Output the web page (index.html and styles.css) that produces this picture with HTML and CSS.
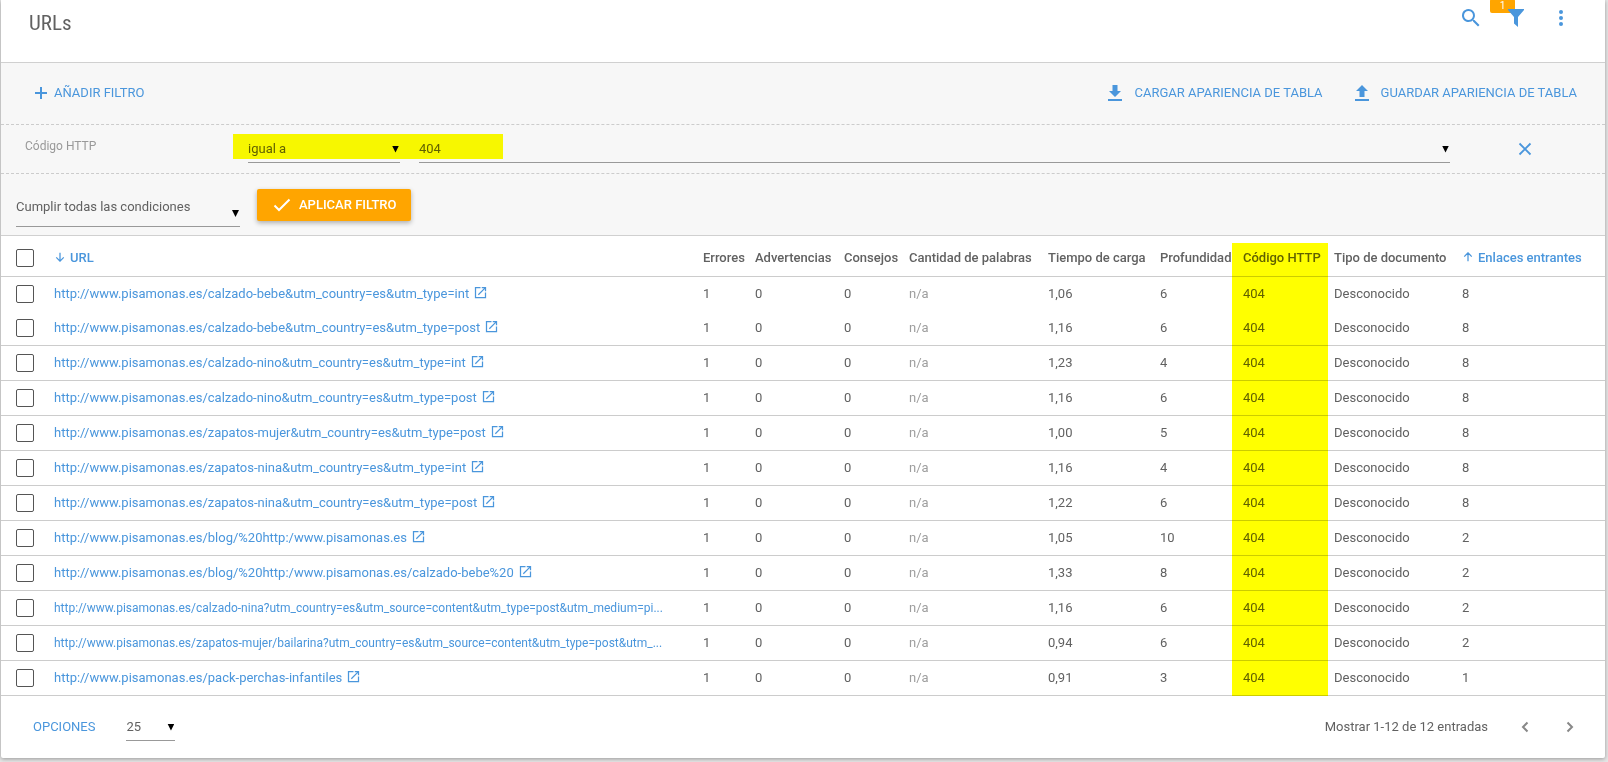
FILE: index.html
```html
<!DOCTYPE html>
<html lang="es">
<head>
<meta charset="utf-8">
<title>URLs</title>
<link rel="stylesheet" href="styles.css">
</head>
<body>
<svg class="sprite" aria-hidden="true">
  <symbol id="i-open" viewBox="0 0 24 24"><path d="M19 19H5V5h7V3H3v18h18v-9h-2v7zM14 3v2h3.600l-9.800 9.800 1.400 1.400L19 6.400V10h2V3h-7z"/></symbol>
  <symbol id="i-arrow" viewBox="0 0 12 12"><path d="M6 1v10M1.500 6.500L6 11l4.500-4.500"/></symbol>
</svg>
<main class="card">
  <header class="top">
    <h1 class="title">URLs</h1>
    <div class="tools">
      <button class="icon-btn" type="button" aria-label="Buscar">
        <svg width="24" height="24" viewBox="0 0 24 24"><path d="M15.500 14h-.8l-.3-.3A6.500 6.500 0 1 0 13.700 14.400l.3.3v.8l5 5 1.500-1.500-5-5zm-6 0a4.500 4.500 0 1 1 0-9 4.500 4.500 0 0 1 0 9z"/></svg>
      </button>
      <button class="icon-btn" type="button" aria-label="Filtros">
        <svg width="24" height="24" viewBox="0 0 24 24"><path d="M4 3h16v1L14 11v10L10 17.500V11L4 4z"/></svg>
        <span class="badge">1</span>
      </button>
      <button class="icon-btn" type="button" aria-label="Más opciones">
        <svg width="24" height="24" viewBox="0 0 24 24"><circle cx="12" cy="6" r="2"/><circle cx="12" cy="12" r="2"/><circle cx="12" cy="18" r="2"/></svg>
      </button>
    </div>
  </header>

  <section class="filters">
    <div class="actions">
      <button class="link-btn add" type="button"><svg width="14" height="14" viewBox="0 0 14 14"><path d="M6 1h2v5h5v2H8v5H6V8H1V6h5z"/></svg>AÑADIR FILTRO</button>
      <button class="link-btn load" type="button"><svg width="14" height="16" viewBox="0 0 14 16"><path d="M4.500 0h5v6H13L7 12 1 6h3.500zM0 14h14v2H0z"/></svg>CARGAR APARIENCIA DE TABLA</button>
      <button class="link-btn" type="button"><svg width="14" height="16" viewBox="0 0 14 16"><path d="M7 0l6 6H9.500v6h-5V6H1zM0 14h14v2H0z"/></svg>GUARDAR APARIENCIA DE TABLA</button>
    </div>
    <div class="condition">
      <label class="cond-name" for="op">Código HTTP</label>
      <span class="select op"><select id="op"><option>igual a</option></select></span>
      <span class="select val"><select aria-label="Valor"><option>404</option></select></span>
      <button class="icon-btn" type="button" aria-label="Quitar filtro"><svg width="14" height="14" viewBox="0 0 14 14"><path d="M1.500 1.500l11 11M12.500 1.500l-11 11" fill="none" stroke="currentColor" stroke-width="1.800"/></svg></button>
      <span class="marker"></span>
    </div>
    <div class="apply">
      <span class="select match"><select aria-label="Condiciones"><option>Cumplir todas las condiciones</option></select></span>
      <button class="primary" type="button"><svg width="18" height="14" viewBox="0 0 18 14"><path d="M1.500 7.500l4.500 4.500L16.500 1.500"/></svg>APLICAR FILTRO</button>
    </div>
  </section>

  <table class="grid">
    <colgroup><col class="c-check"><col><col class="c-err"><col class="c-adv"><col class="c-con"><col class="c-pal"><col class="c-load"><col class="c-prof"><col class="c-http"><col class="c-tipo"><col class="c-enl"></colgroup>
    <thead>
      <tr><th><input type="checkbox" aria-label="Seleccionar todo"></th><th class="sorted"><svg class="arrow" width="10" height="10"><use href="#i-arrow"/></svg>URL</th><th>Errores</th><th>Advertencias</th><th>Consejos</th><th>Cantidad de palabras</th><th>Tiempo de carga</th><th>Profundidad</th><th class="http">Código HTTP</th><th class="tipo">Tipo de documento</th><th class="sorted"><svg class="arrow up" width="10" height="10"><use href="#i-arrow"/></svg>Enlaces entrantes</th></tr>
    </thead>
    <tbody>
      <tr class="joined"><td><input type="checkbox" aria-label="Fila 1"></td><td class="url"><a href="#">http://www.pisamonas.es/calzado-bebe&amp;utm_country=es&amp;utm_type=int<svg class="open"><use href="#i-open"/></svg></a></td><td>1</td><td>0</td><td>0</td><td class="na">n/a</td><td>1,06</td><td>6</td><td class="http">404</td><td class="tipo">Desconocido</td><td>8</td></tr>
      <tr><td><input type="checkbox" aria-label="Fila 2"></td><td class="url"><a href="#">http://www.pisamonas.es/calzado-bebe&amp;utm_country=es&amp;utm_type=post<svg class="open"><use href="#i-open"/></svg></a></td><td>1</td><td>0</td><td>0</td><td class="na">n/a</td><td>1,16</td><td>6</td><td class="http">404</td><td class="tipo">Desconocido</td><td>8</td></tr>
      <tr><td><input type="checkbox" aria-label="Fila 3"></td><td class="url"><a href="#">http://www.pisamonas.es/calzado-nino&amp;utm_country=es&amp;utm_type=int<svg class="open"><use href="#i-open"/></svg></a></td><td>1</td><td>0</td><td>0</td><td class="na">n/a</td><td>1,23</td><td>4</td><td class="http">404</td><td class="tipo">Desconocido</td><td>8</td></tr>
      <tr><td><input type="checkbox" aria-label="Fila 4"></td><td class="url"><a href="#">http://www.pisamonas.es/calzado-nino&amp;utm_country=es&amp;utm_type=post<svg class="open"><use href="#i-open"/></svg></a></td><td>1</td><td>0</td><td>0</td><td class="na">n/a</td><td>1,16</td><td>6</td><td class="http">404</td><td class="tipo">Desconocido</td><td>8</td></tr>
      <tr><td><input type="checkbox" aria-label="Fila 5"></td><td class="url"><a href="#">http://www.pisamonas.es/zapatos-mujer&amp;utm_country=es&amp;utm_type=post<svg class="open"><use href="#i-open"/></svg></a></td><td>1</td><td>0</td><td>0</td><td class="na">n/a</td><td>1,00</td><td>5</td><td class="http">404</td><td class="tipo">Desconocido</td><td>8</td></tr>
      <tr><td><input type="checkbox" aria-label="Fila 6"></td><td class="url"><a href="#">http://www.pisamonas.es/zapatos-nina&amp;utm_country=es&amp;utm_type=int<svg class="open"><use href="#i-open"/></svg></a></td><td>1</td><td>0</td><td>0</td><td class="na">n/a</td><td>1,16</td><td>4</td><td class="http">404</td><td class="tipo">Desconocido</td><td>8</td></tr>
      <tr><td><input type="checkbox" aria-label="Fila 7"></td><td class="url"><a href="#">http://www.pisamonas.es/zapatos-nina&amp;utm_country=es&amp;utm_type=post<svg class="open"><use href="#i-open"/></svg></a></td><td>1</td><td>0</td><td>0</td><td class="na">n/a</td><td>1,22</td><td>6</td><td class="http">404</td><td class="tipo">Desconocido</td><td>8</td></tr>
      <tr><td><input type="checkbox" aria-label="Fila 8"></td><td class="url"><a href="#">http://www.pisamonas.es/blog/%20http:/www.pisamonas.es<svg class="open"><use href="#i-open"/></svg></a></td><td>1</td><td>0</td><td>0</td><td class="na">n/a</td><td>1,05</td><td>10</td><td class="http">404</td><td class="tipo">Desconocido</td><td>2</td></tr>
      <tr><td><input type="checkbox" aria-label="Fila 9"></td><td class="url"><a href="#">http://www.pisamonas.es/blog/%20http:/www.pisamonas.es/calzado-bebe%20<svg class="open"><use href="#i-open"/></svg></a></td><td>1</td><td>0</td><td>0</td><td class="na">n/a</td><td>1,33</td><td>8</td><td class="http">404</td><td class="tipo">Desconocido</td><td>2</td></tr>
      <tr><td><input type="checkbox" aria-label="Fila 10"></td><td class="url long"><a href="#">http://www.pisamonas.es/calzado-nina?utm_country=es&amp;utm_source=content&amp;utm_type=post&amp;utm_medium=pi...</a></td><td>1</td><td>0</td><td>0</td><td class="na">n/a</td><td>1,16</td><td>6</td><td class="http">404</td><td class="tipo">Desconocido</td><td>2</td></tr>
      <tr><td><input type="checkbox" aria-label="Fila 11"></td><td class="url long"><a href="#">http://www.pisamonas.es/zapatos-mujer/bailarina?utm_country=es&amp;utm_source=content&amp;utm_type=post&amp;utm_...</a></td><td>1</td><td>0</td><td>0</td><td class="na">n/a</td><td>0,94</td><td>6</td><td class="http">404</td><td class="tipo">Desconocido</td><td>2</td></tr>
      <tr><td><input type="checkbox" aria-label="Fila 12"></td><td class="url"><a href="#">http://www.pisamonas.es/pack-perchas-infantiles<svg class="open"><use href="#i-open"/></svg></a></td><td>1</td><td>0</td><td>0</td><td class="na">n/a</td><td>0,91</td><td>3</td><td class="http">404</td><td class="tipo">Desconocido</td><td>1</td></tr>
    </tbody>
  </table>

  <footer class="foot">
    <button class="link-btn" type="button">OPCIONES</button>
    <span class="select size"><select aria-label="Filas por página"><option>25</option></select></span>
    <span class="count">Mostrar 1-12 de 12 entradas</span>
    <button class="page-btn" type="button" aria-label="Anterior"><svg width="8" height="12" viewBox="0 0 8 12"><path d="M6.500 1.500L2 6l4.500 4.500"/></svg></button>
    <button class="page-btn" type="button" aria-label="Siguiente"><svg width="8" height="12" viewBox="0 0 8 12"><path d="M1.500 1.500L6 6l-4.500 4.500"/></svg></button>
  </footer>
</main>
</body>
</html>
```
FILE: styles.css
```css
* { box-sizing: border-box; }
body {
  margin: 0;
  padding: 0 3px 4px 1px;
  background: #e6e6e6;
  color: #616161;
  font: 13px/20px Roboto, "Liberation Sans", sans-serif;
}
.sprite { position: absolute; width: 0; height: 0; }
svg { display: block; flex: none; fill: currentColor; }
button { margin: 0; padding: 0; border: 0; background: none; color: #4a96dc; font: inherit; cursor: pointer; }
.card { background: #fff; border-radius: 0 0 2px 2px; box-shadow: 0 1px 4px rgba(0, 0, 0, .35); }

.top { display: flex; justify-content: space-between; align-items: flex-start; height: 62px; padding: 6px 32px 0 28px; }
.title { margin: 0; padding-top: 4px; font: 400 21px/26px "Roboto Condensed", Roboto, sans-serif; }
.tools { display: flex; gap: 21px; }
.icon-btn { position: relative; z-index: 0; display: flex; justify-content: center; align-items: center; min-width: 24px; height: 24px; }
.badge { position: absolute; top: -7px; left: -14px; z-index: -1; width: 25px; height: 14px; border-radius: 2px; background: #ffa500; color: #fff; font-size: 10px; line-height: 14px; }

.filters { background: #f7f7f7; border-top: 1px solid #d0d0d0; border-bottom: 1px solid #d0d0d0; }
.actions { display: flex; align-items: center; height: 61px; padding: 0 28px 2px 33px; gap: 32px; }
.link-btn { display: flex; align-items: center; gap: 12px; }
.add { gap: 6px; margin-right: auto; }
.condition { position: relative; display: flex; align-items: center; height: 50px; padding: 0 68px 0 24px; border: dashed #ccc; border-width: 1px 0; }
.cond-name { width: 223px; padding-bottom: 6px; color: #999; font-size: 12px; }
.select { position: relative; display: block; border-bottom: 1px solid #999; }
.select::after { content: ""; position: absolute; right: 1px; bottom: 9px; width: 7px; height: 7px; background: #000; clip-path: polygon(0 0, 100% 0, 50% 100%); pointer-events: none; }
select { display: block; width: 100%; height: 26px; margin: 0; padding: 0; border: 0; background: none; color: inherit; font: inherit; appearance: none; }
.op { width: 152px; margin-right: 19px; }
.val { flex: 1; margin-right: 63px; }
.marker { position: absolute; top: 9px; left: 232px; width: 270px; height: 25px; background: #ff0; mix-blend-mode: multiply; pointer-events: none; }
.apply { display: flex; align-items: flex-start; gap: 17px; height: 61px; padding: 15px; }
.match { width: 224px; }
.match select { height: 37px; padding-bottom: 2px; }
.primary { display: flex; align-items: center; gap: 8px; height: 32px; padding: 0 15px 0 16px; border-radius: 2px; background: #ffa500; color: #fff; font-weight: 500; box-shadow: 0 2px 5px rgba(0, 0, 0, .3); }
.primary svg { fill: none; stroke: currentColor; stroke-width: 2; }

.grid { width: 100%; table-layout: fixed; border-collapse: separate; border-spacing: 0; }
.c-check { width: 53px; } .c-err { width: 52px; } .c-adv { width: 89px; } .c-con { width: 65px; }
.c-pal { width: 139px; } .c-load { width: 112px; } .c-prof { width: 72px; } .c-http { width: 96px; }
.c-tipo { width: 134px; } .c-enl { width: 143px; }
th, td { height: 35px; padding: 0; border-bottom: 1px solid #ccc; text-align: left; vertical-align: middle; white-space: nowrap; }
th { height: 41px; padding-top: 4px; font-weight: 500; }
.joined td { height: 34px; border-bottom: 0; }
th:first-child, td:first-child { padding-left: 15px; }
.sorted { color: #4a96dc; }
.arrow { display: inline-block; margin: 0 5px 0 1px; fill: none; stroke: currentColor; stroke-width: 1.500; }
.up { transform: rotate(180deg); }
.http { padding-left: 11px; background: #ff0; color: #616100; border-color: #cccc00; }
th.http { background: linear-gradient(#fff 7px, #ff0 7px); }
.tipo { padding-left: 6px; }
.na { color: #9e9e9e; }
.url { padding-right: 12px; overflow: hidden; text-overflow: ellipsis; }
.long { font-size: 12px; }
a { color: #4a96dc; text-decoration: none; }
.open { display: inline-block; width: 15px; height: 15px; margin-left: 4px; vertical-align: -2px; }
input[type="checkbox"] { display: block; width: 18px; height: 18px; margin: 0; border: 1px solid #555; border-radius: 2px; background: #fff; appearance: none; }

.foot { display: flex; align-items: center; height: 62px; padding: 0 23px 0 32px; }
.size { width: 49px; margin-left: 31px; }
.count { margin-left: auto; margin-right: 25px; }
.page-btn { display: flex; justify-content: center; width: 24px; color: #888; }
.page-btn + .page-btn { margin-left: 21px; }
.page-btn svg { fill: none; stroke: currentColor; stroke-width: 2; }
```
